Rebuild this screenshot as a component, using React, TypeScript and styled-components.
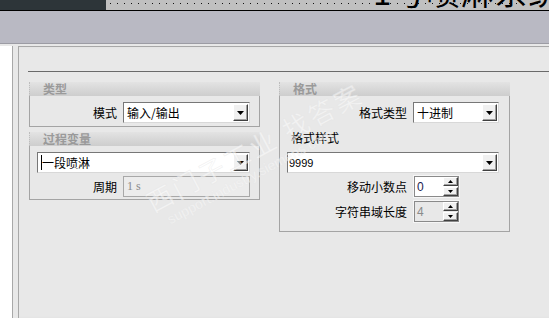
import React from "react";
import styled, { createGlobalStyle } from "styled-components";

const Global = createGlobalStyle`
  html, body { margin: 0; padding: 0; background: #e8e8e8; }
  body {
    width: 549px; height: 318px; overflow: hidden;
    font-family: "Noto Sans CJK SC", "Noto Sans", sans-serif;
  }
`;

const Screen = styled.div`
  position: relative;
  display: flex;
  width: 549px;
  height: 318px;
  overflow: hidden;
`;

const Main = styled.div`
  flex: 0 0 542px;
  display: flex;
  flex-direction: column;
`;

const RightEdge = styled.div`
  flex: 1;
  background: #2a2a2a;
`;

const TopStrip = styled.div`
  display: flex;
  height: 10px;
  border-bottom: 1px solid #000;
`;

const DarkBar = styled.div`
  flex: 0 0 106px;
  background: #2d3539;
`;

const Dotted = styled.div`
  flex: 1;
  display: flex;
  align-items: flex-end;
  overflow: hidden;
  padding-left: 267px;
  background-color: #c0c0c0;
  background-image: radial-gradient(circle, #111 0.7px, transparent 1px);
  background-size: 7px 7px;
  background-position: 1px 0;
`;

const BigTitle = styled.span`
  font-size: 33px;
  line-height: 33px;
  white-space: nowrap;
  color: #000;
  margin-bottom: 2px;
  letter-spacing: 1px;
`;

const TitleBand = styled.div`
  height: 32px;
  background: #b9b9c3;
  border-bottom: 1px solid #9c9ca4;
`;

const Body = styled.div`
  flex: 1;
  display: flex;
  padding-top: 2px;
  background: #e8e8e8;
`;

const SideWhite = styled.div`
  flex: 0 0 12px;
  background: #fff;
  border-right: 1px solid #a8a8a8;
`;

const Panel = styled.div`
  flex: 1;
  margin-left: 5px;
  border-left: 1px solid #a8a8a8;
  border-top: 1px solid #a8a8a8;
  background: #e8e8e8;
  box-shadow: inset -8px 0 7px -5px rgba(0, 0, 0, 0.22);
  display: flex;
  flex-direction: column;
`;

const Rule = styled.div`
  height: 1px;
  margin: 24px 0 0 9px;
  background: #6a6a6a;
`;

const Columns = styled.div`
  display: flex;
  align-items: flex-start;
  gap: 19px;
  margin: 10px 0 0 10px;
`;

const Column = styled.div`
  width: 231px;
  display: flex;
  flex-direction: column;
  gap: 5px;
`;

const Group = styled.section`
  width: 231px;
  display: flex;
  flex-direction: column;
`;

const GroupHeader = styled.div`
  height: 14px;
  line-height: 14px;
  padding-left: 13px;
  font-size: 12px;
  font-weight: bold;
  color: #9a9a9a;
  background: linear-gradient(to bottom, #e3e3e3, #cdcdcd);
  border-left: 1px dotted #bdbdbd;
`;

const GroupBody = styled.div<{ $cols: string; $pad: string }>`
  display: grid;
  grid-template-columns: ${(p) => p.$cols};
  column-gap: 6px;
  row-gap: 3px;
  align-items: center;
  padding: ${(p) => p.$pad};
  border: 1px solid #a4a4a4;
  border-top: none;
`;

const FormatBody = styled(GroupBody)`
  row-gap: 2px;
`;

const Label = styled.span`
  justify-self: end;
  font-size: 12px;
  color: #000;
  white-space: nowrap;
`;

const SectionLabel = styled.span`
  grid-column: 1 / -1;
  height: 25px;
  line-height: 25px;
  padding-left: 4px;
  font-size: 12px;
  color: #000;
`;

const ComboFrame = styled.div<{ $span?: boolean }>`
  grid-column: ${(p) => (p.$span ? "1 / -1" : "auto")};
  height: 21px;
  box-sizing: border-box;
  display: flex;
  align-items: center;
  padding: 1px;
  background: #fff;
  border: 1px solid #777;
  border-right-color: #d8d8d8;
  border-bottom-color: #d8d8d8;
`;

const ComboText = styled.span<{ $latin?: boolean }>`
  flex: 1;
  display: flex;
  align-items: center;
  padding-left: ${(p) => (p.$latin ? "0" : "2px")};
  font-size: ${(p) => (p.$latin ? "11px" : "12px")};
  font-family: ${(p) =>
    p.$latin ? '"Liberation Sans", Arial, sans-serif' : "inherit"};
  color: #000;
  white-space: nowrap;
  overflow: hidden;
`;

const Caret = styled.span`
  display: inline-block;
  width: 1px;
  height: 15px;
  background: #000;
`;

const RaisedButton = styled.span`
  box-sizing: border-box;
  display: flex;
  align-items: center;
  justify-content: center;
  background: #f0f0f0;
  border: 1px solid;
  border-color: #fff #404040 #404040 #fff;
  box-shadow: inset -1px -1px 0 #a0a0a0;
`;

const DropButton = styled(RaisedButton)`
  width: 15px;
  height: 17px;
`;

const DisabledInput = styled.div`
  height: 21px;
  box-sizing: border-box;
  display: flex;
  align-items: center;
  padding-left: 3px;
  background: #ececec;
  border: 1px solid #a8a8a8;
  font-family: "Liberation Serif", "Times New Roman", serif;
  font-size: 12px;
  color: #8a8a8a;
`;

const SpinFrame = styled.div`
  justify-self: start;
  width: 47px;
  height: 23px;
  box-sizing: border-box;
  display: flex;
  border: 1px solid #f6f6f6;
`;

const SpinInner = styled.div<{ $disabled?: boolean }>`
  flex: 1;
  display: flex;
  border: 1px solid #8a8a8a;
  background: ${(p) => (p.$disabled ? "#e8e8e8" : "#fff")};
`;

const SpinValue = styled.span<{ $disabled?: boolean }>`
  flex: 1;
  display: flex;
  align-items: center;
  padding-left: 2px;
  font-family: "Liberation Sans", Arial, sans-serif;
  font-size: 12px;
  color: ${(p) => (p.$disabled ? "#8a8a8a" : "#1a1a50")};
`;

const SpinButtons = styled.div`
  width: 15px;
  display: flex;
  flex-direction: column;
  gap: 1px;
`;

const SpinButton = styled(RaisedButton)`
  flex: 1;
`;

const Watermark = styled.div`
  position: absolute;
  pointer-events: none;
  left: 142px;
  top: 192px;
  transform-origin: left top;
  transform: rotate(-28deg);
  white-space: nowrap;
  display: flex;
  flex-direction: column;
  line-height: 1;
`;

const WatermarkCn = styled.span`
  font-size: 26px;
  letter-spacing: 3px;
  color: rgba(255, 255, 255, 0.5);
  -webkit-text-stroke: 0.6px rgba(228, 228, 228, 0.55);
`;

const WatermarkEn = styled.span`
  margin-top: 4px;
  margin-left: 10px;
  font-family: "Liberation Sans", Arial, sans-serif;
  font-size: 14px;
  color: rgba(255, 255, 255, 0.5);
  -webkit-text-stroke: 0.4px rgba(228, 228, 228, 0.55);
`;

const ArrowDown = ({ w = 7, h = 4 }: { w?: number; h?: number }) => (
  <svg width={w} height={h} viewBox={`0 0 ${w} ${h}`}>
    <path d={`M0 0H${w}L${w / 2} ${h}Z`} fill="#000" />
  </svg>
);

const ArrowUp = ({ w = 5, h = 3 }: { w?: number; h?: number }) => (
  <svg width={w} height={h} viewBox={`0 0 ${w} ${h}`}>
    <path d={`M0 ${h}H${w}L${w / 2} 0Z`} fill="#000" />
  </svg>
);

const Combo = ({
  children,
  span,
  latin,
}: {
  children: React.ReactNode;
  span?: boolean;
  latin?: boolean;
}) => (
  <ComboFrame $span={span}>
    <ComboText $latin={latin}>{children}</ComboText>
    <DropButton>
      <ArrowDown />
    </DropButton>
  </ComboFrame>
);

const Spin = ({ value, disabled }: { value: string; disabled?: boolean }) => (
  <SpinFrame>
    <SpinInner $disabled={disabled}>
      <SpinValue $disabled={disabled}>{value}</SpinValue>
      <SpinButtons>
        <SpinButton>
          <ArrowUp />
        </SpinButton>
        <SpinButton>
          <ArrowDown w={5} h={3} />
        </SpinButton>
      </SpinButtons>
    </SpinInner>
  </SpinFrame>
);

export default function App() {
  return (
    <>
      <Global />
      <Screen>
        <Main>
          <TopStrip>
            <DarkBar />
            <Dotted>
              <BigTitle>1号喷淋系统</BigTitle>
            </Dotted>
          </TopStrip>
          <TitleBand />
          <Body>
            <SideWhite />
            <Panel>
              <Rule />
              <Columns>
                <Column>
                  <Group>
                    <GroupHeader>类型</GroupHeader>
                    <GroupBody $cols="80px 127px" $pad="6px 9px 3px 7px">
                      <Label>模式</Label>
                      <Combo>输入/输出</Combo>
                    </GroupBody>
                  </Group>
                  <Group>
                    <GroupHeader>过程变量</GroupHeader>
                    <GroupBody $cols="80px 127px" $pad="6px 9px 2px 7px">
                      <Combo span>
                        <Caret />
                        一段喷淋
                      </Combo>
                      <Label>周期</Label>
                      <DisabledInput>1 s</DisabledInput>
                    </GroupBody>
                  </Group>
                </Column>
                <Column>
                  <Group>
                    <GroupHeader>格式</GroupHeader>
                    <FormatBody $cols="120px 86px" $pad="6px 10px 8px 7px">
                      <Label>格式类型</Label>
                      <Combo>十进制</Combo>
                      <SectionLabel>格式样式</SectionLabel>
                      <Combo span latin>
                        9999
                      </Combo>
                      <Label>移动小数点</Label>
                      <Spin value="0" />
                      <Label>字符串域长度</Label>
                      <Spin value="4" disabled />
                    </FormatBody>
                  </Group>
                </Column>
              </Columns>
            </Panel>
          </Body>
        </Main>
        <RightEdge />
        <Watermark>
          <WatermarkCn>西门子工业 找答案</WatermarkCn>
          <WatermarkEn>support.industry.siemens.com</WatermarkEn>
        </Watermark>
      </Screen>
    </>
  );
}
